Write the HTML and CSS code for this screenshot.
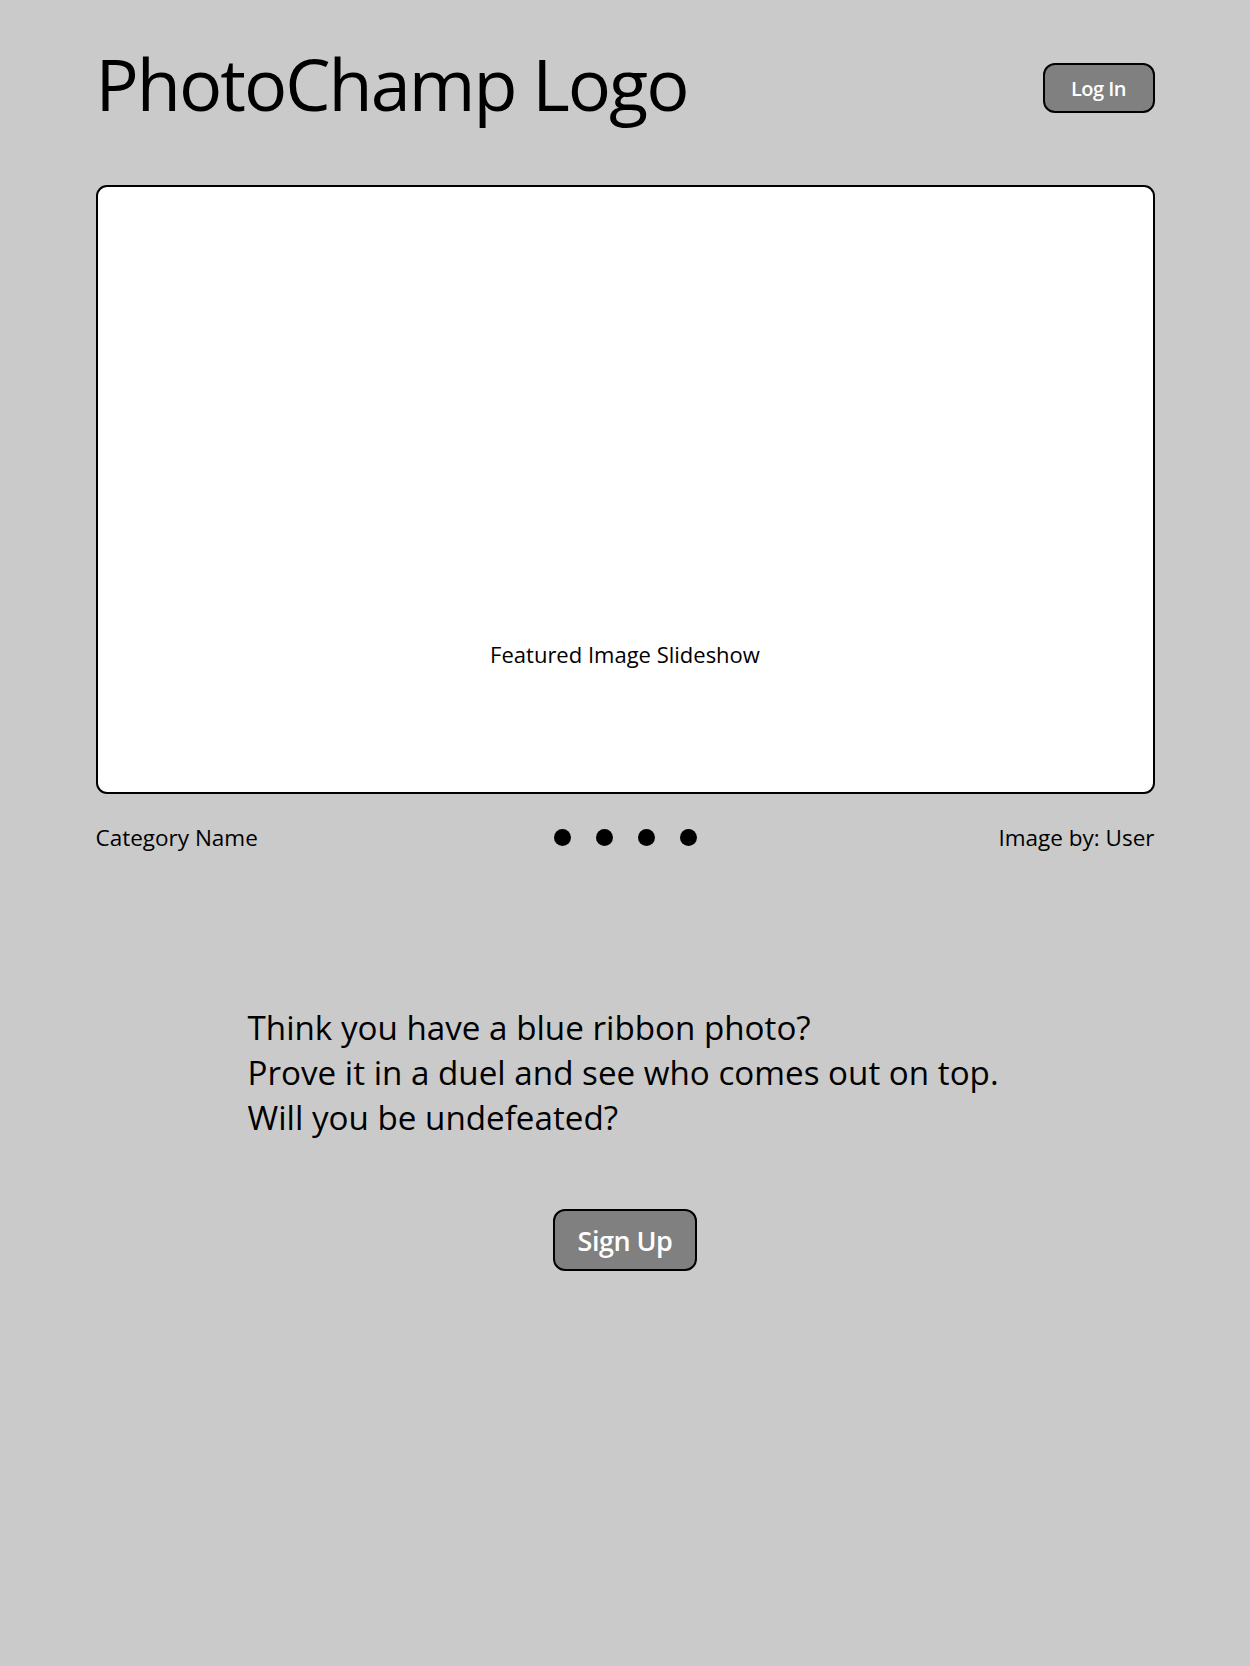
FILE: index.html
```html
<!DOCTYPE html>
<html lang="en">
<head>
<meta charset="utf-8">
<title>PhotoChamp</title>
<link rel="stylesheet" href="styles.css">
</head>
<body>
<div class="page">
  <header class="header">
    <h1 class="logo">PhotoChamp Logo</h1>
    <button class="btn btn-login" type="button">Log In</button>
  </header>
  <section class="slideshow">
    <p class="slideshow-label">Featured Image Slideshow</p>
  </section>
  <div class="meta">
    <span class="meta-category">Category Name</span>
    <div class="dots">
      <span class="dot"></span>
      <span class="dot"></span>
      <span class="dot"></span>
      <span class="dot"></span>
    </div>
    <span class="meta-credit">Image by: User</span>
  </div>
  <div class="pitch">
    <p class="pitch-text">Think you have a blue ribbon photo?<br>Prove it in a duel and see who comes out on top.<br>Will you be undefeated?</p>
  </div>
  <div class="cta">
    <button class="btn btn-signup" type="button">Sign Up</button>
  </div>
</div>
</body>
</html>
```

FILE: styles.css
```css
html, body {
  margin: 0;
  padding: 0;
  background: #cacaca;
}
body {
  font-family: "Open Sans", "Noto Sans", sans-serif;
  color: #000;
  min-height: 1666px;
}
.page {
  width: 1059px;
  margin: 0 auto;
  padding-top: 40px;
  box-sizing: border-box;
}
.header {
  display: flex;
  justify-content: space-between;
  align-items: flex-start;
  height: 100px;
}
.logo {
  margin: 7px 0 0;
  font-weight: 400;
  font-size: 72px;
  line-height: 1;
  letter-spacing: -2px;
}
.btn {
  font-family: "Open Sans", "Noto Sans", sans-serif;
  background: #808080;
  color: #fff;
  border: 2px solid #000;
  box-sizing: border-box;
  padding: 0;
  cursor: pointer;
  font-weight: 600;
}
.btn-login {
  width: 112px;
  height: 50px;
  border-radius: 12px;
  font-size: 20px;
  margin-top: 23px;
  letter-spacing: -0.5px;
}
.slideshow {
  margin-top: 45px;
  height: 609px;
  box-sizing: border-box;
  background: #fff;
  border: 2px solid #000;
  border-radius: 11px;
  display: flex;
  flex-direction: column;
  justify-content: flex-end;
  align-items: center;
  padding-bottom: 122px;
}
.slideshow-label {
  margin: 0;
  font-size: 22px;
  line-height: 32px;
}
.meta {
  display: flex;
  justify-content: space-between;
  align-items: center;
  margin-top: 28px;
  height: 30px;
  font-size: 22.5px;
}
.meta-category, .meta-credit {
  width: 260px;
}
.meta-credit {
  text-align: right;
}
.dots {
  display: flex;
  gap: 25px;
}
.dot {
  width: 17px;
  height: 17px;
  border-radius: 50%;
  background: #000;
}
.pitch {
  margin-top: 153px;
  padding-left: 152px;
}
.pitch-text {
  margin: 0;
  font-size: 33.2px;
  line-height: 45px;
}
.cta {
  display: flex;
  justify-content: center;
  margin-top: 69px;
}
.btn-signup {
  width: 144px;
  height: 62px;
  border-radius: 12px;
  font-size: 27px;
  letter-spacing: -0.5px;
}
```
